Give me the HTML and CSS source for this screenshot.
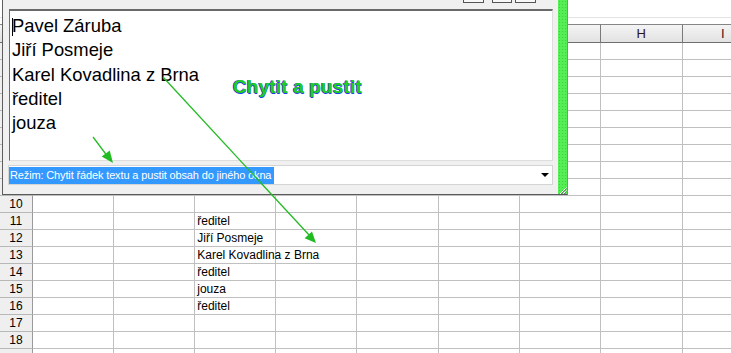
FILE: index.html
```html
<!DOCTYPE html>
<html lang="cs">
<head>
    <meta charset="UTF-8">
    <title>Chytit a pustit</title>
    <link rel="stylesheet" href="styles.css">
</head>
<body>
    <div id="desktop">
        <div class="sheet">
            <div class="formula"></div>
            <table class="grid">
                <colgroup>
                    <col class="c-head"><col><col><col><col><col><col><col><col class="c-wide"><col>
                </colgroup>
                <thead>
                    <tr><th></th><th>A</th><th>B</th><th>C</th><th>D</th><th>E</th><th>F</th><th>G</th><th>H</th><th>I</th></tr>
                </thead>
                <tbody>
                    <tr><td class="num">1</td><td></td><td></td><td></td><td></td><td></td><td></td><td></td><td></td><td></td></tr>
                    <tr><td class="num">2</td><td></td><td></td><td></td><td></td><td></td><td></td><td></td><td></td><td></td></tr>
                    <tr><td class="num">3</td><td></td><td></td><td></td><td></td><td></td><td></td><td></td><td></td><td></td></tr>
                    <tr><td class="num">4</td><td></td><td></td><td></td><td></td><td></td><td></td><td></td><td></td><td></td></tr>
                    <tr><td class="num">5</td><td></td><td></td><td></td><td></td><td></td><td></td><td></td><td></td><td></td></tr>
                    <tr><td class="num">6</td><td></td><td></td><td></td><td></td><td></td><td></td><td></td><td></td><td></td></tr>
                    <tr><td class="num">7</td><td></td><td></td><td></td><td></td><td></td><td></td><td></td><td></td><td></td></tr>
                    <tr><td class="num">8</td><td></td><td></td><td></td><td></td><td></td><td></td><td></td><td></td><td></td></tr>
                    <tr><td class="num">9</td><td></td><td></td><td></td><td></td><td></td><td></td><td></td><td></td><td></td></tr>
                    <tr><td class="num">10</td><td></td><td></td><td></td><td></td><td></td><td></td><td></td><td></td><td></td></tr>
                    <tr><td class="num">11</td><td></td><td></td><td>ředitel</td><td></td><td></td><td></td><td></td><td></td><td></td></tr>
                    <tr><td class="num">12</td><td></td><td></td><td>Jiří Posmeje</td><td></td><td></td><td></td><td></td><td></td><td></td></tr>
                    <tr><td class="num">13</td><td></td><td></td><td>Karel Kovadlina z Brna</td><td></td><td></td><td></td><td></td><td></td><td></td></tr>
                    <tr><td class="num">14</td><td></td><td></td><td>ředitel</td><td></td><td></td><td></td><td></td><td></td><td></td></tr>
                    <tr><td class="num">15</td><td></td><td></td><td>jouza</td><td></td><td></td><td></td><td></td><td></td><td></td></tr>
                    <tr><td class="num">16</td><td></td><td></td><td>ředitel</td><td></td><td></td><td></td><td></td><td></td><td></td></tr>
                    <tr><td class="num">17</td><td></td><td></td><td></td><td></td><td></td><td></td><td></td><td></td><td></td></tr>
                    <tr><td class="num">18</td><td></td><td></td><td></td><td></td><td></td><td></td><td></td><td></td><td></td></tr>
                    <tr><td class="num"></td><td></td><td></td><td></td><td></td><td></td><td></td><td></td><td></td><td></td></tr>
                </tbody>
            </table>
        </div>

        <div class="window">
            <div class="main">
                <div class="titlebar">
                    <span class="tbtn"></span>
                    <span class="tbtn tbtn-mid"></span>
                    <span class="tbtn"></span>
                </div>
                <div class="editor">
                    <div class="lines">
                        <div><span class="caret"></span>Pavel Záruba</div>
                        <div>Jiří Posmeje</div>
                        <div>Karel Kovadlina z Brna</div>
                        <div>ředitel</div>
                        <div>jouza</div>
                    </div>
                    <div class="label">Chytit a pustit</div>
                </div>
                <div class="combo">
                    <span class="selected">Režim: Chytit řádek textu a pustit obsah do jiného okna</span>
                    <span class="drop"></span>
                </div>
            </div>
            <div class="grip">
                <svg class="resize" width="9" height="8" viewBox="0 0 9 8">
                    <path d="M8.5 1.5 L2 8 M8.5 4.5 L5 8" stroke="#fff" stroke-width="1"/>
                    <path d="M8.5 2.5 L3 8 M8.5 5.5 L6 8" stroke="#7a7a7a" stroke-width="1"/>
                </svg>
            </div>
        </div>

        <svg class="arrows" width="731" height="353" viewBox="0 0 731 353">
            <line x1="163" y1="77" x2="310" y2="236" stroke="#22bb22" stroke-width="1.3"/>
            <polygon points="316,243 304.6,238.3 312,231.5" fill="#22bb22"/>
            <line x1="93" y1="137" x2="108" y2="157" stroke="#22bb22" stroke-width="1.3"/>
            <polygon points="113,163 101.7,156.6 109.7,150.5" fill="#22bb22"/>
        </svg>
    </div>
</body>
</html>
```

FILE: styles.css
```css
body {
    margin: 0;
    background-color: #fff;
    font-family: "Liberation Sans", Arial, sans-serif;
    overflow: hidden;
}

#desktop {
    position: relative;
    width: 731px;
    height: 353px;
    overflow: hidden;
}

/* spreadsheet underneath */
.formula {
    height: 17px;
    border-bottom: 1px solid #e4e4e4;
    margin-bottom: 6px;
}

.grid {
    border-collapse: separate;
    border-spacing: 0;
    table-layout: fixed;
    width: 764px;
    font-size: 12px;
}

.grid col {
    width: 81px;
}

.grid col.c-head {
    width: 33px;
}

.grid col.c-wide {
    width: 82px;
}

.grid th {
    height: 17px;
    padding: 0;
    font-weight: normal;
    font-size: 13px;
    color: #301010;
    background: linear-gradient(#f4f4f4, #e2e2e2);
    border-top: 1px solid #858585;
    border-bottom: 1px solid #6e6e6e;
    border-right: 1px solid #7a7a7a;
}

.grid td {
    height: 16px;
    padding: 0 0 0 2px;
    line-height: 16px;
    white-space: nowrap;
    overflow: visible;
    color: #000;
    border-right: 1px solid #c0c0c0;
    border-bottom: 1px solid #c0c0c0;
}

.grid td.num {
    padding: 0;
    text-align: center;
    background-color: #efefef;
    border-right: 1px solid #9a9a9a;
    border-bottom: 1px solid #b8b8b8;
}

/* floating window */
.window {
    position: absolute;
    left: 2px;
    top: 0;
    width: 566px;
    height: 195px;
    box-sizing: border-box;
    display: flex;
    background-color: #f0f0f0;
    border-left: 1px solid #5e5e5e;
    border-right: 1px solid #8a8a8a;
    border-bottom: 1px solid #5a5a5a;
}

.main {
    flex: 1;
    display: flex;
    flex-direction: column;
    padding: 0 5px 0 6px;
}

.titlebar {
    height: 9px;
    display: flex;
    justify-content: flex-end;
    padding-right: 17px;
}

.tbtn {
    width: 21px;
    height: 3px;
    box-sizing: border-box;
    border: 1px solid #555;
    border-top: none;
    background-color: #f8f8f8;
}

.tbtn-mid {
    width: 20px;
    margin: 0 3px 0 8px;
}

.editor {
    position: relative;
    height: 152px;
    box-sizing: border-box;
    background-color: #fff;
    border-top: 2px solid #6a6a6a;
    border-left: 1px solid #6a6a6a;
    border-right: 1px solid #dedede;
    border-bottom: 1px solid #dedede;
}

.lines {
    padding: 3px 0 0 2px;
    font-size: 18.4px;
    line-height: 24.3px;
    color: #000;
}

.caret {
    display: inline-block;
    width: 0;
    height: 18px;
    margin-right: -1px;
    vertical-align: -4px;
    border-left: 1px solid #000;
}

.label {
    position: absolute;
    left: 223px;
    top: 65px;
    font-size: 19px;
    font-weight: bold;
    line-height: 22px;
    letter-spacing: 0.15px;
    color: #22cc22;
    text-shadow: -1px 0 0 #1c3cf0, 0 1px 0 #1c3cf0;
}

.combo {
    margin-top: 4px;
    height: 20px;
    box-sizing: border-box;
    display: flex;
    align-items: center;
    justify-content: space-between;
    background-color: #fff;
    border: 1px solid #d4d4d4;
    margin-left: -1px;
}

.selected {
    height: 17px;
    line-height: 17px;
    padding: 0 3px 0 1px;
    font-size: 11px;
    letter-spacing: -0.14px;
    color: #fff;
    background-color: #3399ff;
}

.drop {
    width: 0;
    height: 0;
    margin-right: 3px;
    border-left: 4px solid transparent;
    border-right: 4px solid transparent;
    border-top: 4px solid #000;
}

.grip {
    width: 9px;
    display: flex;
    align-items: flex-end;
    background-color: #55ee55;
    background-image: radial-gradient(#3fd03f 0.6px, transparent 0.8px);
    background-size: 3px 3px;
}

.resize {
    display: block;
}

.arrows {
    position: absolute;
    left: 0;
    top: 0;
    pointer-events: none;
}
```
